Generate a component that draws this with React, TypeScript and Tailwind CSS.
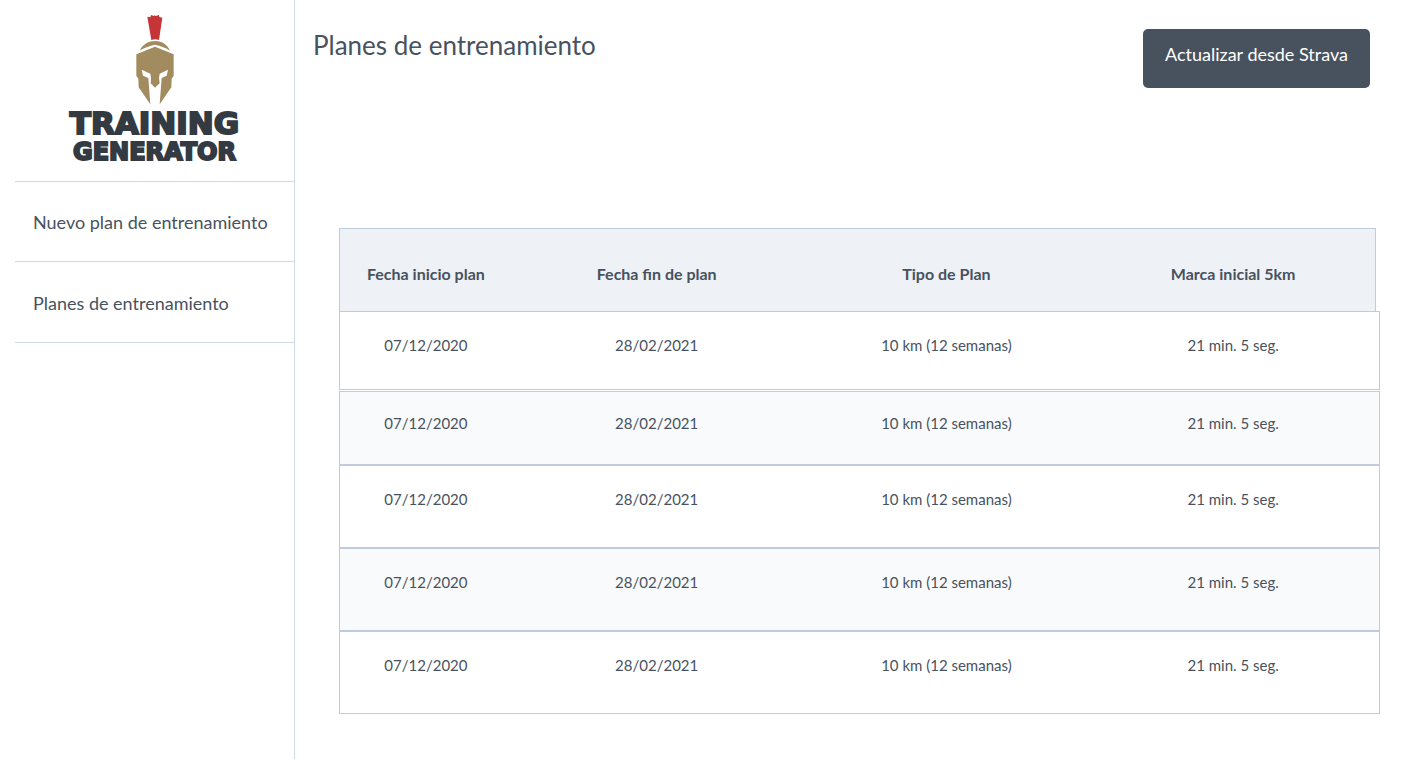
const plans = [
  { start: '07/12/2020', end: '28/02/2021', type: '10 km (12 semanas)', mark: '21 min. 5 seg.', row: 'h-[79px] pt-[21px] bg-white' },
  { start: '07/12/2020', end: '28/02/2021', type: '10 km (12 semanas)', mark: '21 min. 5 seg.', row: 'mt-px h-[74px] pt-[19px] bg-[#f9fafc]' },
  { start: '07/12/2020', end: '28/02/2021', type: '10 km (12 semanas)', mark: '21 min. 5 seg.', row: 'h-[83px] pt-[21px] bg-white' },
  { start: '07/12/2020', end: '28/02/2021', type: '10 km (12 semanas)', mark: '21 min. 5 seg.', row: 'h-[83px] pt-[21px] bg-[#f9fafc]' },
  { start: '07/12/2020', end: '28/02/2021', type: '10 km (12 semanas)', mark: '21 min. 5 seg.', row: 'h-[83px] pt-[21px] bg-white' },
];

function Helmet() {
  return (
    <svg viewBox="30 18 120 276" className="h-[92px] w-10" aria-hidden="true">
      <path fill="#c53437" d="M67 26 L76 28 L78 21 L87 24 L89 22 L92 24 L102 21 L103 27 L112 29 L102 96 Q90 91 79 96 Z" />
      <path fill="#a38b60" d="M44 128 C54 108 71 99 90 99 C109 99 126 108 135 128 Q121 117 90 110 Q59 117 44 128 Z" />
      <path
        fill="#a38b60"
        d="M90 116 L146 139 V203 L140 212 L139 238 L104 289 L110 210 L125 203 L129 185 L104 197 L102 210 L104 226 L90 239 L77 226 L78 210 L76 197 L50 185 L54 203 L70 210 L76 289 L41 238 L40 212 L34 203 V139 Z"
      />
    </svg>
  );
}

function Sidebar() {
  return (
    <aside className="w-[295px] shrink-0 border-r border-[#d0d9e6] pl-[15px]">
      <div className="h-[181px] pt-3.5 text-center font-['DejaVu_Sans',sans-serif] font-bold text-[#343a42]">
        <div className="flex justify-center">
          <Helmet />
        </div>
        <p className="pt-1 text-[24px] leading-[26px] [-webkit-text-stroke:2px_#343a42]">
          <span className="text-[31px]">TRAINING</span>
          <br />
          GENERATOR
        </p>
      </div>
      <nav className="border-t border-[#d0d9e6] text-[18px] leading-6">
        <a href="#nuevo" className="block border-b border-[#d0d9e6] px-[18px] pt-7 pb-[27px]">
          Nuevo plan de entrenamiento
        </a>
        <a href="#planes" className="block border-b border-[#d0d9e6] px-[18px] pt-[29px] pb-[27px]">
          Planes de entrenamiento
        </a>
      </nav>
    </aside>
  );
}

export default function App() {
  return (
    <div className="flex min-h-screen bg-white font-[Lato,sans-serif] text-[#48525e]">
      <Sidebar />
      <main className="min-w-0 flex-1">
        <header className="flex items-start justify-between pt-[29px] pr-10 pl-[18px]">
          <h1 className="text-[26px] leading-8">Planes de entrenamiento</h1>
          <button type="button" className="rounded-[5px] bg-[#48525e] px-[22px] pt-[13px] pb-[22px] text-[18px] leading-6 text-white">
            Actualizar desde Strava
          </button>
        </header>
        <div className="mt-[140px] mr-[30px] ml-11">
          <table className="block text-[15px] leading-6">
            <thead className="block">
              <tr className="mr-1 grid h-[83px] grid-cols-[172fr_290fr_290fr_284fr] border-x border-t border-[#c0ccdc] bg-[#eef1f6] pt-[33px] text-base leading-6">
                <th>Fecha inicio plan</th>
                <th>Fecha fin de plan</th>
                <th>Tipo de Plan</th>
                <th>Marca inicial 5km</th>
              </tr>
            </thead>
            <tbody className="block">
              {plans.map((plan, i) => (
                <tr key={i} className={`grid grid-cols-[172fr_290fr_290fr_284fr] border border-[#c0ccdc] pr-1 text-center ${plan.row}`}>
                  <td>{plan.start}</td>
                  <td>{plan.end}</td>
                  <td>{plan.type}</td>
                  <td>{plan.mark}</td>
                </tr>
              ))}
            </tbody>
          </table>
        </div>
      </main>
    </div>
  );
}
